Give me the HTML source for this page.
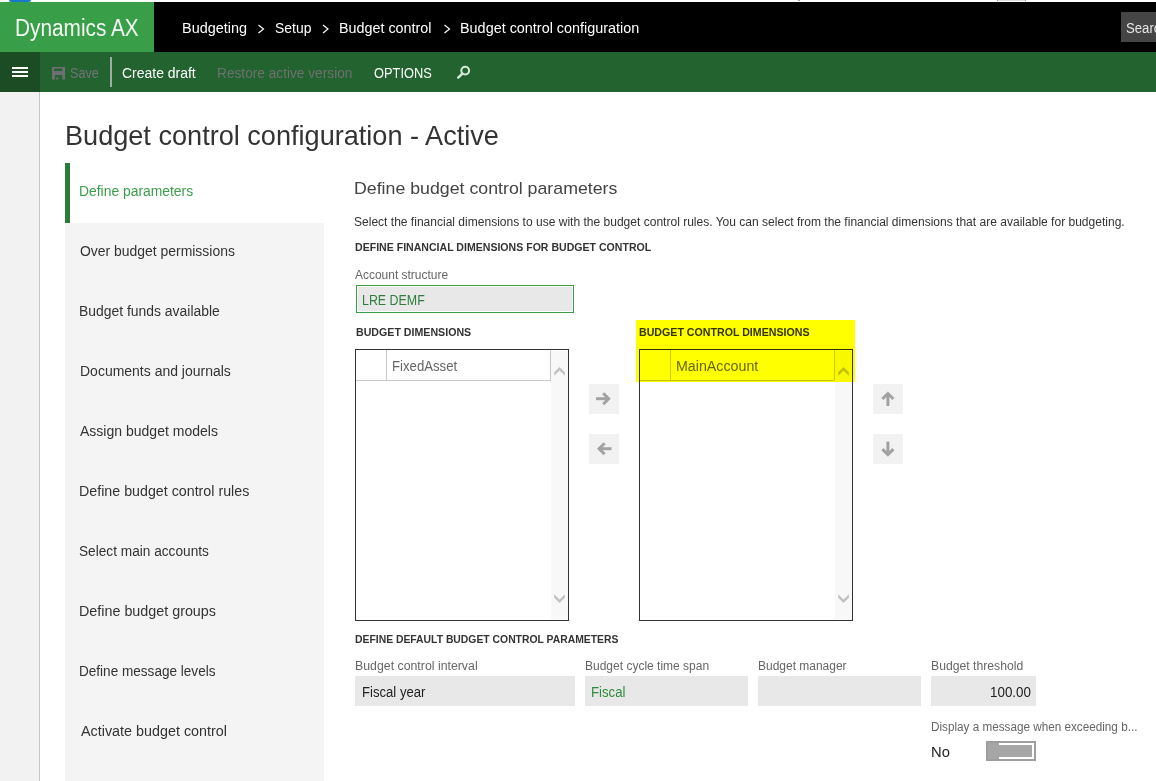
<!DOCTYPE html>
<html><head><meta charset="utf-8"><style>
html,body{margin:0;padding:0;width:1156px;height:781px;overflow:hidden;background:#fff;}
body{position:relative;font-family:"Liberation Sans",sans-serif;}
.a{position:absolute;}
.t{position:absolute;white-space:nowrap;transform-origin:0 0;}
</style></head><body>
<div class="a" style="left:9px;top:0;width:22px;height:1.5px;background:#1a78cc;border-radius:0 0 2px 2px;"></div>
<div class="a" style="left:798px;top:0;width:2px;height:1px;background:#a0a0a0;"></div>
<div class="a" style="left:997px;top:0;width:27px;height:1px;background:#dcdcdc;border-left:1px solid #999;border-right:1px solid #999;"></div>
<div class="a" style="left:0;top:2px;width:154px;height:50px;background:#399e48;"></div>
<div class="a" style="left:154px;top:2px;width:1002px;height:50px;background:#000;"></div>
<div class="a" style="left:1121px;top:12px;width:35px;height:30px;background:#454545;"></div>
<svg class="a" style="left:0;top:0" width="1156" height="92">
 <g fill="none" stroke="#ffffff" stroke-width="1.2">
  <polyline points="258.5,25 263.5,29 258.5,33"/>
  <polyline points="323,25 328,29 323,33"/>
  <polyline points="444.5,25 449.5,29 444.5,33"/>
 </g>
</svg>
<div class="a" style="left:0;top:52px;width:1156px;height:40px;background:#22632f;"></div>
<div class="a" style="left:0;top:52px;width:40px;height:40px;background:#1c4c24;"></div>
<div class="a" style="left:12px;top:67px;width:16px;height:2px;background:#fff;"></div>
<div class="a" style="left:12px;top:71px;width:16px;height:2px;background:#fff;"></div>
<div class="a" style="left:12px;top:75px;width:16px;height:2px;background:#fff;"></div>
<svg class="a" style="left:52px;top:67px" width="13" height="13" viewBox="0 0 13 13">
 <path fill="#6f6e72" fill-rule="evenodd" d="M0 0H13V12.5H10.2V8H2.9V12.5H0Z M2.1 1.4V4H10.5V1.4Z"/>
 <rect x="4.2" y="10.5" width="2.2" height="2" fill="#6f6e72"/>
</svg>
<div class="a" style="left:110px;top:57px;width:1.6px;height:30px;background:#9bb09e;"></div>
<svg class="a" style="left:455px;top:64px" width="18" height="18" viewBox="0 0 18 18">
 <circle cx="10.2" cy="6.6" r="3.9" fill="none" stroke="#d9ecd9" stroke-width="2"/>
 <line x1="7.4" y1="9.6" x2="3.2" y2="13.6" stroke="#d9ecd9" stroke-width="2.4" stroke-linecap="round"/>
</svg>
<div class="a" style="left:0;top:92px;width:39px;height:689px;background:#f2f2f2;"></div>
<div class="a" style="left:39px;top:92px;width:1px;height:689px;background:#c6c6c6;"></div>
<div class="a" style="left:65px;top:163px;width:5px;height:60px;background:#2a7d39;"></div>
<div class="a" style="left:65px;top:223px;width:259px;height:558px;background:#f4f4f4;"></div>
<div class="a" style="left:356px;top:285px;width:216px;height:26px;border:1px solid #3a9e48;background:#fff;"></div>
<div class="a" style="left:358px;top:287px;width:214px;height:24px;background:#e8e8e8;"></div>
<!-- list boxes -->
<div class="a" style="left:355px;top:349px;width:212px;height:270px;border:1px solid #333;background:#fff;"></div>
<div class="a" style="left:551px;top:351px;width:17px;height:268px;background:#f8f8f8;"></div>
<div class="a" style="left:386px;top:350px;width:1px;height:30px;background:#c8c8c8;"></div>
<div class="a" style="left:550px;top:350px;width:1px;height:31px;background:#c8c8c8;"></div>
<div class="a" style="left:356px;top:380px;width:195px;height:1px;background:#c8c8c8;"></div>
<div class="a" style="left:639px;top:349px;width:212px;height:270px;border:1px solid #333;background:#fff;"></div>
<div class="a" style="left:835px;top:351px;width:17px;height:268px;background:#f8f8f8;"></div>
<div class="a" style="left:670px;top:350px;width:1px;height:30px;background:#c8c8c8;"></div>
<div class="a" style="left:834px;top:350px;width:1px;height:31px;background:#c8c8c8;"></div>
<div class="a" style="left:640px;top:380px;width:195px;height:1px;background:#c8c8c8;"></div>
<svg class="a" style="left:0;top:0" width="1156" height="640">
 <g fill="#c2c2c2">
  <polygon points="554.2,372.3 559.5,366.9 564.9,372.3 564.9,375.8 559.5,370.6 554.2,375.8"/>
  <polygon points="554.2,594.2 559.5,599.4 564.9,594.2 564.9,597.7 559.5,603 554.2,597.7"/>
  <polygon points="838.2,372.3 843.5,366.9 848.9,372.3 848.9,375.8 843.5,370.6 838.2,375.8"/>
  <polygon points="838.2,594.2 843.5,599.4 848.9,594.2 848.9,597.7 843.5,603 838.2,597.7"/>
 </g>
</svg>
<!-- arrow buttons -->
<div class="a" style="left:589px;top:384px;width:30px;height:30px;background:#f2f2f2;"></div>
<div class="a" style="left:589px;top:434px;width:30px;height:30px;background:#f2f2f2;"></div>
<div class="a" style="left:873px;top:384px;width:30px;height:30px;background:#f2f2f2;"></div>
<div class="a" style="left:873px;top:434px;width:30px;height:30px;background:#f2f2f2;"></div>
<svg class="a" style="left:0;top:0" width="1156" height="480">
 <g fill="none" stroke="#a2a2a2" stroke-width="3" stroke-linejoin="miter">
  <line x1="596" y1="398.7" x2="609" y2="398.7"/><polyline points="603.2,393.2 608.7,398.7 603.2,404.2"/>
  <line x1="611.5" y1="448.7" x2="598.5" y2="448.7"/><polyline points="604.6,443.2 599.1,448.7 604.6,454.2"/>
  <line x1="887.9" y1="406" x2="887.9" y2="393.5"/><polyline points="882.4,399 887.9,393.5 893.4,399"/>
  <line x1="887.9" y1="441.6" x2="887.9" y2="454.5"/><polyline points="882.4,449.1 887.9,454.6 893.4,449.1"/>
 </g>
</svg>
<!-- fields -->
<div class="a" style="left:355px;top:676px;width:220px;height:30px;background:#e8e8e8;"></div>
<div class="a" style="left:585px;top:676px;width:163px;height:30px;background:#e8e8e8;"></div>
<div class="a" style="left:758px;top:676px;width:163px;height:30px;background:#e8e8e8;"></div>
<div class="a" style="left:931px;top:676px;width:105px;height:30px;background:#e8e8e8;"></div>
<!-- toggle -->
<div class="a" style="left:986px;top:741px;width:46px;height:16px;border:2px solid #9e9e9e;background:#a6a6a6;"></div>
<div class="a" style="left:999px;top:743px;width:35px;height:16px;background:#fff;"></div>
<div class="a" style="left:999px;top:745px;width:33px;height:12px;background:#a6a6a6;"></div>

<span id="dyn" class="t" style="left:15.16px;top:16.73px;font-size:23px;line-height:23px;font-weight:400;color:#f4faf5;transform:scaleX(0.9043);">Dynamics AX</span>
<span id="bc1" class="t" style="left:181.81px;top:20.75px;font-size:14px;line-height:14px;font-weight:400;color:#ffffff;transform:scaleX(1.0309);">Budgeting</span>
<span id="bc2" class="t" style="left:275.07px;top:20.75px;font-size:14px;line-height:14px;font-weight:400;color:#ffffff;transform:scaleX(0.9950);">Setup</span>
<span id="bc3" class="t" style="left:339.30px;top:20.75px;font-size:14px;line-height:14px;font-weight:400;color:#ffffff;transform:scaleX(1.0240);">Budget control</span>
<span id="bc4" class="t" style="left:460.30px;top:20.75px;font-size:14px;line-height:14px;font-weight:400;color:#ffffff;transform:scaleX(1.0287);">Budget control configuration</span>
<span id="srch" class="t" style="left:1126.15px;top:21.15px;font-size:14px;line-height:14px;font-weight:400;color:#e6e6e6;transform:scaleX(1.0000);transform:scaleX(0.94);">Search</span>
<span id="save" class="t" style="left:70.34px;top:66.15px;font-size:14px;line-height:14px;font-weight:400;color:#76727a;transform:scaleX(0.9021);">Save</span>
<span id="cdraft" class="t" style="left:122.24px;top:66.15px;font-size:14px;line-height:14px;font-weight:400;color:#ffffff;transform:scaleX(0.9969);">Create draft</span>
<span id="restore" class="t" style="left:217.14px;top:66.15px;font-size:14px;line-height:14px;font-weight:400;color:#6f7070;transform:scaleX(0.9776);">Restore active version</span>
<span id="options" class="t" style="left:373.84px;top:66.15px;font-size:14px;line-height:14px;font-weight:400;color:#ffffff;transform:scaleX(0.9165);">OPTIONS</span>
<span id="title" class="t" style="left:64.57px;top:120.87px;font-size:28.5px;line-height:28.5px;font-weight:400;color:#333333;transform:scaleX(0.9510);">Budget control configuration - Active</span>
<span id="nav0" class="t" style="left:79.39px;top:184.15px;font-size:14px;line-height:14px;font-weight:400;color:#3a9e48;transform:scaleX(0.9912);">Define parameters</span>
<span id="nav1" class="t" style="left:80.05px;top:244.15px;font-size:14px;line-height:14px;font-weight:400;color:#333333;transform:scaleX(0.9950);">Over budget permissions</span>
<span id="nav2" class="t" style="left:79.34px;top:304.15px;font-size:14px;line-height:14px;font-weight:400;color:#333333;transform:scaleX(0.9937);">Budget funds available</span>
<span id="nav3" class="t" style="left:79.54px;top:364.15px;font-size:14px;line-height:14px;font-weight:400;color:#333333;transform:scaleX(0.9992);">Documents and journals</span>
<span id="nav4" class="t" style="left:80.28px;top:424.15px;font-size:14px;line-height:14px;font-weight:400;color:#333333;transform:scaleX(1.0011);">Assign budget models</span>
<span id="nav5" class="t" style="left:79.28px;top:484.15px;font-size:14px;line-height:14px;font-weight:400;color:#333333;transform:scaleX(1.0176);">Define budget control rules</span>
<span id="nav6" class="t" style="left:79.47px;top:544.15px;font-size:14px;line-height:14px;font-weight:400;color:#333333;transform:scaleX(0.9759);">Select main accounts</span>
<span id="nav7" class="t" style="left:79.25px;top:604.15px;font-size:14px;line-height:14px;font-weight:400;color:#333333;transform:scaleX(1.0230);">Define budget groups</span>
<span id="nav8" class="t" style="left:79.47px;top:664.15px;font-size:14px;line-height:14px;font-weight:400;color:#333333;transform:scaleX(0.9689);">Define message levels</span>
<span id="nav9" class="t" style="left:80.85px;top:724.15px;font-size:14px;line-height:14px;font-weight:400;color:#333333;transform:scaleX(1.0249);">Activate budget control</span>
<span id="sec" class="t" style="left:354.12px;top:180.31px;font-size:17px;line-height:17px;font-weight:400;color:#444444;transform:scaleX(1.0438);">Define budget control parameters</span>
<span id="desc" class="t" style="left:354.44px;top:215.54px;font-size:12px;line-height:12px;font-weight:400;color:#333333;transform:scaleX(1.0029);">Select the financial dimensions to use with the budget control rules. You can select from the financial dimensions that are available for budgeting.</span>
<span id="h1" class="t" style="left:355.02px;top:241.69px;font-size:11px;line-height:11px;font-weight:700;color:#333333;transform:scaleX(0.9604);">DEFINE FINANCIAL DIMENSIONS FOR BUDGET CONTROL</span>
<span id="acs" class="t" style="left:355.18px;top:268.84px;font-size:12px;line-height:12px;font-weight:400;color:#666666;transform:scaleX(0.9963);">Account structure</span>
<span id="lre" class="t" style="left:361.98px;top:293.15px;font-size:14px;line-height:14px;font-weight:400;color:#2e7d3c;transform:scaleX(0.8861);">LRE DEMF</span>
<span id="h2" class="t" style="left:355.52px;top:326.69px;font-size:11px;line-height:11px;font-weight:700;color:#333333;transform:scaleX(0.9668);">BUDGET DIMENSIONS</span>
<span id="h3" class="t" style="left:638.98px;top:326.69px;font-size:11px;line-height:11px;font-weight:700;color:#333333;transform:scaleX(0.9666);">BUDGET CONTROL DIMENSIONS</span>
<span id="fa" class="t" style="left:391.98px;top:359.15px;font-size:14px;line-height:14px;font-weight:400;color:#666666;transform:scaleX(0.9408);">FixedAsset</span>
<span id="ma" class="t" style="left:675.80px;top:359.15px;font-size:14px;line-height:14px;font-weight:400;color:#666666;transform:scaleX(1.0164);">MainAccount</span>
<span id="h4" class="t" style="left:355.06px;top:633.69px;font-size:11px;line-height:11px;font-weight:700;color:#333333;transform:scaleX(0.9432);">DEFINE DEFAULT BUDGET CONTROL PARAMETERS</span>
<span id="l1" class="t" style="left:354.50px;top:659.54px;font-size:12px;line-height:12px;font-weight:400;color:#666666;transform:scaleX(1.0270);">Budget control interval</span>
<span id="v1" class="t" style="left:361.98px;top:684.85px;font-size:14px;line-height:14px;font-weight:400;color:#222222;transform:scaleX(0.9370);">Fiscal year</span>
<span id="l2" class="t" style="left:584.50px;top:660.34px;font-size:12px;line-height:12px;font-weight:400;color:#666666;transform:scaleX(1.0002);">Budget cycle time span</span>
<span id="v2" class="t" style="left:590.98px;top:684.85px;font-size:14px;line-height:14px;font-weight:400;color:#2e8b3c;transform:scaleX(0.9428);">Fiscal</span>
<span id="l3" class="t" style="left:757.74px;top:659.54px;font-size:12px;line-height:12px;font-weight:400;color:#666666;transform:scaleX(0.9984);">Budget manager</span>
<span id="l4" class="t" style="left:930.50px;top:659.54px;font-size:12px;line-height:12px;font-weight:400;color:#666666;transform:scaleX(1.0174);">Budget threshold</span>
<span id="v4" class="t" style="left:989.52px;top:684.85px;font-size:14px;line-height:14px;font-weight:400;color:#222222;transform:scaleX(0.9564);">100.00</span>
<span id="l5" class="t" style="left:930.50px;top:720.84px;font-size:12px;line-height:12px;font-weight:400;color:#666666;transform:scaleX(0.9762);">Display a message when exceeding b...</span>
<span id="no" class="t" style="left:930.68px;top:744.95px;font-size:14px;line-height:14px;font-weight:400;color:#222222;transform:scaleX(1.0557);">No</span>
<div class="a" style="left:636px;top:320px;width:219px;height:62px;background:#ffff00;mix-blend-mode:multiply;"></div>
</body></html>
